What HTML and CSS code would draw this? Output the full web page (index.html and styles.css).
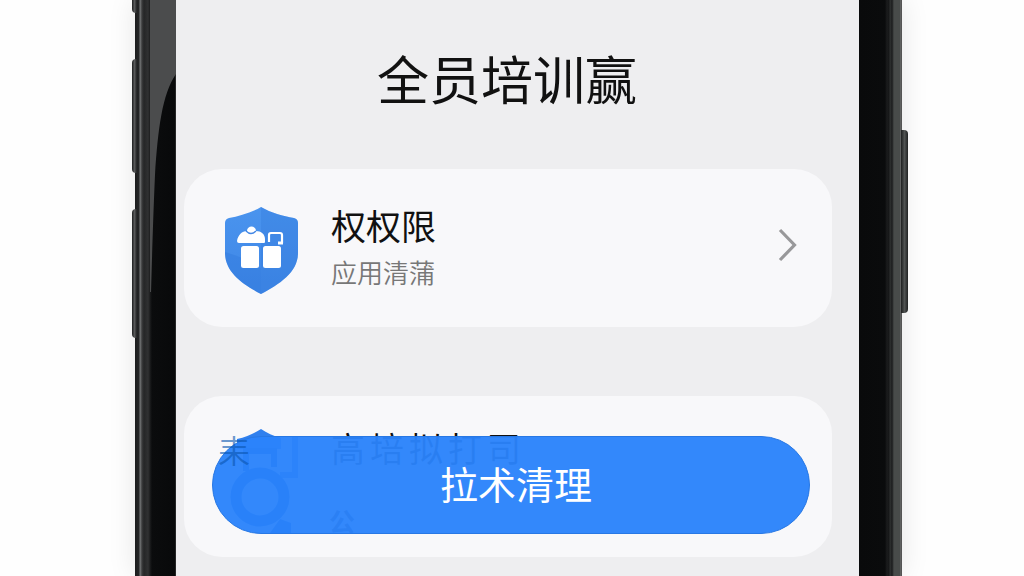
FILE: index.html
```
<!DOCTYPE html>
<html lang="zh-CN">
<head>
    <meta charset="UTF-8">
    <meta name="viewport" content="width=device-width, initial-scale=1.0">
    <title>全员培训赢</title>
    <link rel="stylesheet" href="styles.css">
</head>
<body>
    <div class="phone">
        <span class="side-key key-top"></span>
        <span class="side-key key-up"></span>
        <span class="side-key key-down"></span>
        <span class="side-key key-power"></span>

        <div class="edge edge-left">
            <svg class="glare" width="26" height="300" viewBox="0 0 26 300">
                <path d="M0 0H26V74C12 94 8 130 5 175C3 220 2 260 1 292H0Z" fill="#4b4c4d"/>
            </svg>
        </div>

        <div class="screen">
            <h1>全员培训赢</h1>

            <div class="card">
                <svg class="shield" width="74" height="88" viewBox="0 0 74 88">
                    <defs>
                        <linearGradient id="blue" x1="0" y1="0" x2="0" y2="1">
                            <stop offset="0" stop-color="#4a94ee"/>
                            <stop offset="1" stop-color="#3e86e6"/>
                        </linearGradient>
                    </defs>
                    <path d="M37 1C27 7 15 10 5 12Q1 13 1 17V47C1 66 18 78 37 88C56 78 74 66 74 47V17Q74 13 70 12C59 10 47 7 37 1Z" fill="url(#blue)"/>
                    <path d="M37 1V88C56 78 74 66 74 47V17Q74 13 70 12C59 10 47 7 37 1Z" fill="#337bdd" opacity=".35"/>
                    <path d="M1 46Q8 48 18 52L37 62V88C18 78 1 66 1 46Z" fill="#2f79dc" opacity=".4"/>
                    <path d="M13 35C14 29 18 25 23 25C23 19 32 19 32 25C37 25 41 28 41 33V36Q41 37 40 37H15Q13 37 13 35Z" fill="#fff"/>
                    <path d="M22 25Q27 30 32 25" fill="none" stroke="#4387e5" stroke-width="1.300"/>
                    <path d="M45 36V29Q45 27 47 27H56Q58 27 58 29V37" fill="none" stroke="#fff" stroke-width="2.200"/>
                    <path d="M54 37H59" stroke="#fff" stroke-width="3"/>
                    <rect x="17" y="40" width="18" height="22" rx="2.500" fill="#fff"/>
                    <rect x="39" y="40" width="18" height="22" rx="2.500" fill="#fff"/>
                </svg>
                <div class="card-text">
                    <h2>权权限</h2>
                    <p>应用清蒲</p>
                </div>
                <svg class="arrow" width="20" height="34" viewBox="0 0 20 34">
                    <path d="M2 2L16.500 17L2 32" fill="none" stroke="#98989a" stroke-width="3.200"/>
                </svg>
            </div>

            <div class="card card-second">
                <svg class="shield" width="74" height="104" viewBox="0 0 74 104">
                    <path d="M13 10C23 8 31 4 37 0C43 4 49 7 57 9V20H13Z" fill="#3080ee"/>
                    <path d="M22 42V22H50V38" fill="none" stroke="#005bd0" stroke-width="6"/>
                    <path d="M71 8V46H56" fill="none" stroke="#005bd0" stroke-width="6" opacity=".7"/>
                    <circle cx="36" cy="68" r="24" fill="none" stroke="#005bd0" stroke-width="11"/>
                    <path d="M56 90L67 94V104H46Z" fill="#005bd0"/>
                </svg>
                <div class="card-text">
                    <h2>高培拟打司</h2>
                    <p>公</p>
                </div>
                <button class="clean-btn">拉术清理</button>
                <span class="mark">耒</span>
            </div>
        </div>

        <div class="edge edge-right"></div>
    </div>
</body>
</html>
```

FILE: styles.css
```
* {
    box-sizing: border-box;
}

body {
    margin: 0;
    height: 100vh;
    overflow: hidden;
    background: #fefefe;
    font-family: "Noto Sans CJK SC", sans-serif;
    color: #111;
}

h1, h2, p {
    margin: 0;
    font-weight: 400;
}

.phone {
    position: relative;
    display: flex;
    width: 767px;
    height: 576px;
    margin-left: 135px;
    box-shadow: 0 0 26px rgba(0, 0, 0, 0.1);
}

.edge {
    flex: none;
}

.edge-left {
    width: 41px;
    padding-left: 15px;
    background: linear-gradient(90deg, #1b1c1d 0, #252627 4px, #77797a 5px, #3a3b3c 7px, #252627 9px, #303132 13px, #1c1d1e 15px, #0b0c0d 17px, #08090a 40px, #444 41px);
}

.glare {
    display: block;
}

.edge-right {
    width: 43px;
    background: linear-gradient(90deg, #090a0b 0, #0a0b0c 26px, #1b1c1d 28px, #151617 30px, #303232 31px, #1b1c1d 33px, #484b4a 35px, #484b4a 41px, #777 42px, #333 43px);
}

.side-key {
    position: absolute;
    left: -3px;
    width: 5px;
    border-radius: 4px 0 0 4px;
    background: linear-gradient(90deg, #1d1e1f, #58595a 50%, #202122);
}

.key-top {
    top: -20px;
    height: 33px;
}

.key-up {
    top: 59px;
    height: 114px;
}

.key-down {
    top: 209px;
    height: 129px;
}

.key-power {
    top: 130px;
    left: 766px;
    width: 7px;
    height: 183px;
    border-radius: 0 4px 4px 0;
    background: linear-gradient(90deg, #1d1f1f, #505352 50%, #202222);
}

.screen {
    flex: 1;
    padding: 38px 27px 0 8px;
    background: #eeeef0;
}

h1 {
    height: 131px;
    padding-right: 2px;
    font-size: 52px;
    line-height: 80px;
    text-align: center;
}

.card {
    position: relative;
    display: flex;
    height: 158px;
    padding: 37px 34px 0 40px;
    border-radius: 38px;
    background: #f8f8fa;
}

.shield {
    flex: none;
}

.card-text {
    flex: 1;
    margin-left: 33px;
}

h2 {
    margin-top: -3px;
    font-size: 35px;
    line-height: 44px;
}

.card-text p {
    margin-top: 6px;
    font-size: 26px;
    font-weight: 350;
    line-height: 38px;
    color: #777;
}

.arrow {
    margin-top: 22px;
}

.card-second {
    height: 161px;
    margin-top: 69px;
    padding-top: 33px;
}

.card-second h2 {
    margin-top: -3px;
    font-size: 34px;
    letter-spacing: 5px;
}

.card-second p {
    margin: 32px 0 0 -2px;
    font-size: 26px;
    font-weight: 700;
    color: #335;
}

/* the button floats over the second row */
.clean-btn {
    position: absolute;
    top: 40px;
    left: 28px;
    width: 598px;
    height: 98px;
    padding: 0 0 4px 10px;
    border: 1px solid #2878e4;
    border-radius: 49px;
    background: rgba(43, 131, 251, 0.96);
    font-family: inherit;
    font-size: 38px;
    line-height: 90px;
    color: #fff;
}

.mark {
    position: absolute;
    top: 31px;
    left: 34px;
    font-size: 32px;
    font-weight: 350;
    line-height: 44px;
    color: rgba(10, 85, 175, 0.6);
}
```
